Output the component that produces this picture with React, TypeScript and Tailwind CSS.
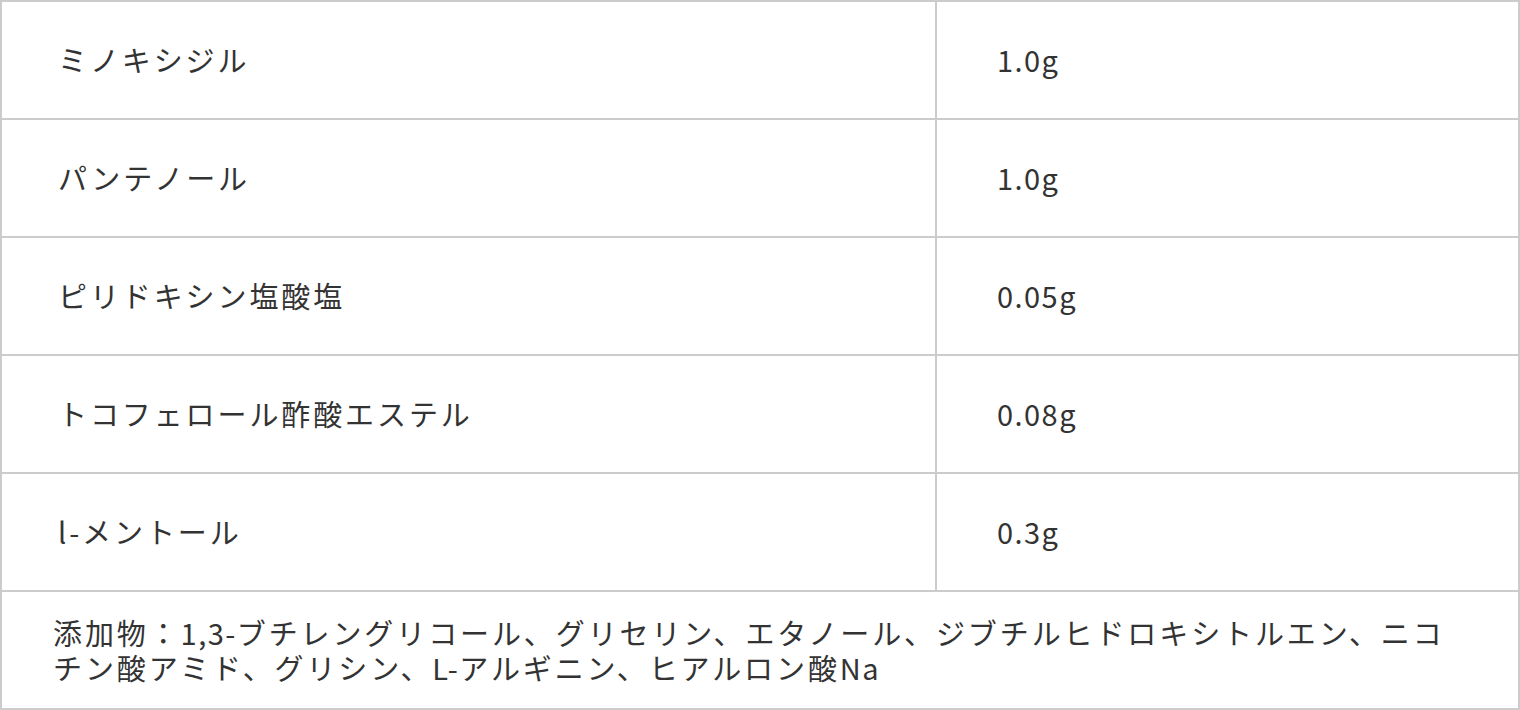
const rows = [
  { name: "ミノキシジル", amount: "1.0g" },
  { name: "パンテノール", amount: "1.0g" },
  { name: "ピリドキシン塩酸塩", amount: "0.05g" },
  { name: "トコフェロール酢酸エステル", amount: "0.08g" },
  { name: "l-メントール", amount: "0.3g" },
];

function Latin({ children }: { children: string }) {
  return <span className="tracking-[0.05em]">{children}</span>;
}

export default function App() {
  return (
    <div className="w-[1520px] h-[710px] bg-white font-['Noto_Sans_CJK_JP',sans-serif] text-[29px] tracking-[0.1em] text-[#333]">
      <div className="border-2 border-[#ccc]">
        {rows.map((r) => (
          <div key={r.name} className="flex h-[118px] border-b-2 border-[#ccc]">
            <div className="w-[933px] flex items-center pl-[56px]">{r.name}</div>
            <div className="flex-1 flex items-center border-l-2 border-[#ccc] pl-[60px] tracking-[0.05em]">
              {r.amount}
            </div>
          </div>
        ))}
        <div className="h-[116px] flex items-center pl-[51px] pr-[56px] leading-[35px]">
          <p>
            添加物：<Latin>1,3-</Latin>ブチレングリコール、グリセリン、エタノール、ジブチルヒドロキシトルエン、ニコチン酸アミド、グリシン、<Latin>L-</Latin>アルギニン、ヒアルロン酸<Latin>Na</Latin>
          </p>
        </div>
      </div>
    </div>
  );
}
